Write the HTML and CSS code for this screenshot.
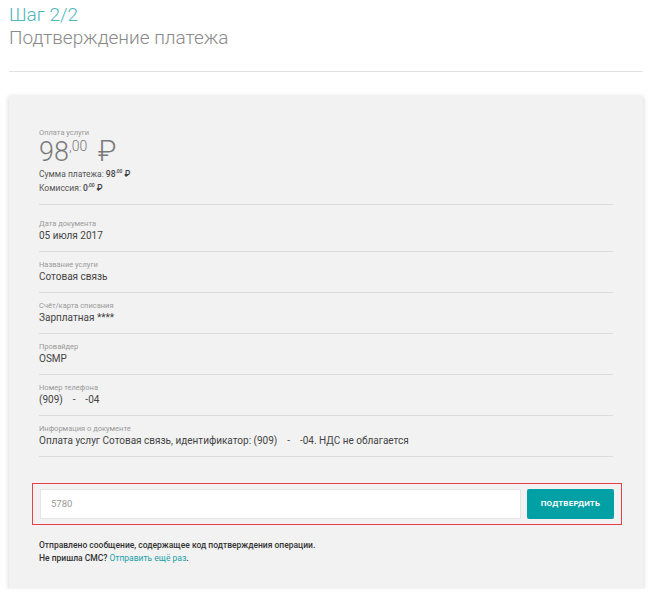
FILE: index.html
```html
<!DOCTYPE html>
<html lang="ru">
<head>
<meta charset="utf-8">
<link rel="stylesheet" href="styles.css">
</head>
<body>
<div class="page">
  <h1 class="step">Шаг 2/2</h1>
  <h2 class="subtitle">Подтверждение платежа</h2>
  <hr class="rule">
  <div class="card">
    <div class="summary">
      <div class="label">Оплата услуги</div>
      <div class="amount">98<span class="cents">,00</span> <span class="rub">₽</span></div>
      <div class="meta first">Сумма платежа: <b>98<sup>,00</sup> ₽</b></div>
      <div class="meta">Комиссия: <b>0<sup>,00</sup> ₽</b></div>
    </div>
    <div class="item first"><div class="label">Дата документа</div><div class="value">05 июля 2017</div></div>
    <div class="item"><div class="label">Название услуги</div><div class="value">Сотовая связь</div></div>
    <div class="item"><div class="label">Счёт/карта списания</div><div class="value">Зарплатная ****</div></div>
    <div class="item"><div class="label">Провайдер</div><div class="value">OSMP</div></div>
    <div class="item"><div class="label">Номер телефона</div><div class="value">(909)&nbsp;&nbsp;&nbsp;&nbsp;-&nbsp;&nbsp;&nbsp;&nbsp;-04</div></div>
    <div class="item"><div class="label">Информация о документе</div><div class="value">Оплата услуг Сотовая связь, идентификатор: (909)&nbsp;&nbsp;&nbsp;&nbsp;-&nbsp;&nbsp;&nbsp;&nbsp;-04. НДС не облагается</div></div>
    <div class="item last"></div>
    <div class="code-box">
      <div class="code-input">5780</div>
      <div class="btn">ПОДТВЕРДИТЬ</div>
    </div>
    <p class="note">Отправлено сообщение, содержащее код подтверждения операции.<br>Не пришла СМС? <a class="link">Отправить ещё раз</a>.</p>
  </div>
</div>
</body>
</html>
```
FILE: styles.css
```css
* { box-sizing: border-box; }
html, body { margin: 0; padding: 0; background: #fff; }
body { font-family: Roboto, "Open Sans", "Liberation Sans", sans-serif; }
.page { padding: 3px 7px 0 9px; }
.step { margin: 0; font-size: 19px; line-height: 24px; font-weight: 300; color: #4db6b9; }
.subtitle { margin: 0; font-size: 19px; line-height: 22px; font-weight: 300; color: #8a8a8a; }
.rule { border: 0; border-top: 1px solid #e2e2e2; margin: 22px 0 0 0; }
.card {
  margin-top: 24px;
  width: 634px;
  background: #f2f2f2;
  box-shadow: 0 1px 5px rgba(0,0,0,0.18);
  padding: 32px 30px 24px 30px;
}
.label { font-size: 7.5px; line-height: 10px; color: #9a9a9a; }
.summary { padding-bottom: 9px; }
.amount { font-size: 27px; line-height: 26px; height: 26px; font-weight: 300; color: #7a7a7a; margin-top: 1px; }
.amount .cents { font-size: 14px; vertical-align: 10px; line-height: 0; }
.amount .rub { font-size: 29px; font-weight: 300; margin-left: 4px; line-height: 0; }
.meta { font-size: 8.5px; line-height: 14px; height: 14px; color: #555; }
.meta.first { margin-top: 2px; }
.meta b { font-weight: 500; color: #444; }
.meta sup { font-size: 5px; vertical-align: 4px; line-height: 0; }
.item { border-top: 1px solid #dcdcdc; padding: 8px 0 8px; }
.item.first { padding-top: 14px; }
.item.last { padding: 0; }
.value { font-size: 10px; line-height: 14px; color: #444; }
.code-box {
  margin-top: 26px;
  margin-left: -7px;
  margin-right: -9px;
  border: 1px solid #e8404a;
  padding: 5px 7px;
  display: flex;
  gap: 6px;
}
.code-input {
  flex: 1;
  height: 30px;
  background: #fff;
  border: 1px solid #e4e4e4;
  font-size: 9.5px;
  line-height: 28px;
  padding-left: 10px;
  color: #9a9a9a;
}
.btn {
  width: 87px;
  height: 30px;
  background: #00a0a5;
  border-radius: 2px;
  color: #fff;
  font-size: 8px;
  font-weight: 700;
  line-height: 30px;
  text-align: center;
  letter-spacing: 0.2px;
}
.note { margin: 14px 0 0; font-size: 8.5px; line-height: 13px; color: #333; font-weight: 500; }
.link { color: #1aa1a6; font-weight: 400; }
```
